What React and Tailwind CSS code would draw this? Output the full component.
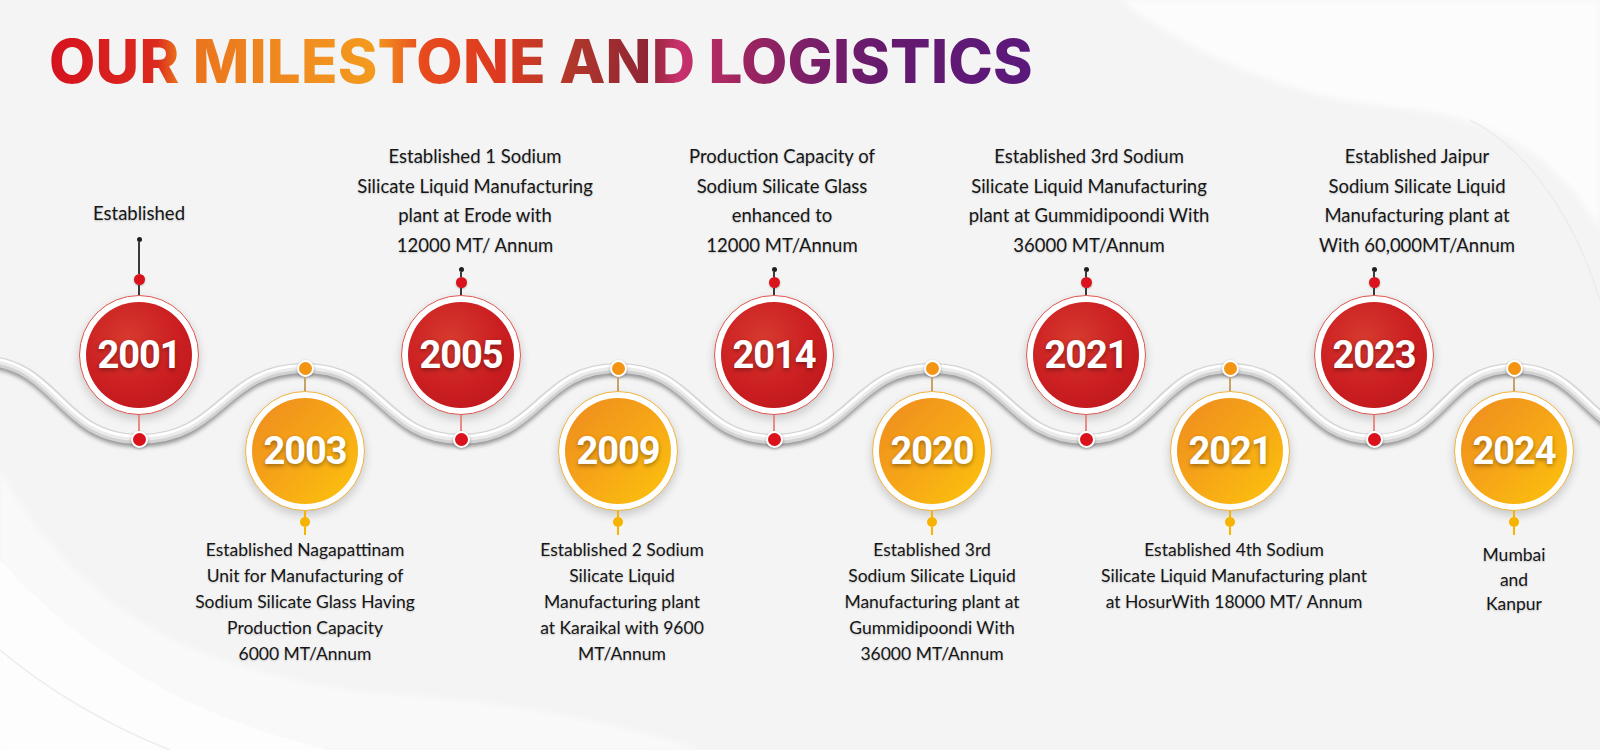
import React from "react";

const nodes = [
  { year: "2001", tone: "red", gap: "ml-[139px]", short: true, lines: ["Established"] },
  {
    year: "2003",
    tone: "orange",
    gap: "ml-[166px]",
    lines: ["Established Nagapattinam", "Unit for Manufacturing of", "Sodium Silicate Glass Having", "Production Capacity", "6000 MT/Annum"],
  },
  {
    year: "2005",
    tone: "red",
    gap: "ml-[156px]",
    shift: "translate-x-[14px]",
    lines: ["Established 1 Sodium", "Silicate Liquid Manufacturing", "plant at Erode with", "12000 MT/ Annum"],
  },
  {
    year: "2009",
    tone: "orange",
    gap: "ml-[157px]",
    shift: "translate-x-[4px]",
    lines: ["Established 2 Sodium", "Silicate Liquid", "Manufacturing plant", "at Karaikal with 9600", "MT/Annum"],
  },
  {
    year: "2014",
    tone: "red",
    gap: "ml-[156px]",
    shift: "translate-x-[8px]",
    lines: ["Production Capacity of", "Sodium Silicate Glass", "enhanced to", "12000 MT/Annum"],
  },
  {
    year: "2020",
    tone: "orange",
    gap: "ml-[158px]",
    lines: ["Established 3rd", "Sodium Silicate Liquid", "Manufacturing plant at", "Gummidipoondi With", "36000 MT/Annum"],
  },
  {
    year: "2021",
    tone: "red",
    gap: "ml-[154px]",
    shift: "translate-x-[3px]",
    lines: ["Established 3rd Sodium", "Silicate Liquid Manufacturing", "plant at Gummidipoondi With", "36000 MT/Annum"],
  },
  {
    year: "2021",
    tone: "orange",
    gap: "ml-[144px]",
    shift: "translate-x-[4px]",
    lines: ["Established 4th Sodium", "Silicate Liquid Manufacturing plant", "at HosurWith 18000 MT/ Annum"],
  },
  {
    year: "2023",
    tone: "red",
    gap: "ml-[144px]",
    shift: "translate-x-[43px]",
    lines: ["Established Jaipur", "Sodium Silicate Liquid", "Manufacturing plant at", "With 60,000MT/Annum"],
  },
  { year: "2024", tone: "orange", gap: "ml-[140px]", compact: true, lines: ["Mumbai", "and", "Kanpur"] },
];

// crest / trough points of the tube, page coordinates
const wavePts = [
  [-22, 360], [139, 439], [305, 368], [461, 439], [618, 368], [774, 439],
  [932, 368], [1086, 439], [1230, 368], [1374, 439], [1514, 368], [1660, 439],
];
const waveD = wavePts.reduce((d, [x, y], i) => {
  if (i === 0) return `M${x} ${y}`;
  const [px, py] = wavePts[i - 1];
  const m = (x - px) / 2;
  return `${d} C${px + m} ${py} ${x - m} ${y} ${x} ${y}`;
}, "");

function Backdrop() {
  return (
    <svg className="absolute inset-0" width="1600" height="750" viewBox="0 0 1600 750">
      <defs>
        <filter id="soft" x="-5%" y="-50%" width="110%" height="200%">
          <feGaussianBlur stdDeviation="2" />
        </filter>
        <filter id="haze" x="-10%" y="-10%" width="120%" height="120%">
          <feGaussianBlur stdDeviation="3" />
        </filter>
      </defs>

      {/* swooshes */}
      <path d="M0 470 C 70 600, 190 680, 400 695 C 540 705, 640 730, 700 750 L 0 750 Z" fill="#ffffff" opacity="0.5" filter="url(#haze)" />
      <path d="M0 560 C 90 660, 200 720, 330 750 L 0 750 Z" fill="#ffffff" opacity="0.7" />
      <path d="M0 650 C 60 700, 120 730, 170 750" stroke="#ececec" strokeWidth="1.5" fill="none" />
      <path d="M1120 0 C 1200 60, 1300 100, 1400 108 C 1500 118, 1560 160, 1600 230 L 1600 0 Z" fill="#ffffff" opacity="0.75" filter="url(#haze)" />
      <path d="M1470 120 C 1530 150, 1575 220, 1600 300" stroke="#ececec" strokeWidth="1.5" fill="none" />

      {/* tube */}
      <path d={waveD} stroke="rgba(0,0,0,0.4)" strokeWidth="9" fill="none" transform="translate(0 3.5)" filter="url(#soft)" />
      <path d={waveD} stroke="#d2d2d2" strokeWidth="10" fill="none" />
      <path d={waveD} stroke="#ebebeb" strokeWidth="6" fill="none" transform="translate(0 -1)" />
      <path d={waveD} stroke="#ffffff" strokeWidth="2.5" fill="none" transform="translate(0 -2.5)" />
    </svg>
  );
}

function YearBadge({ year, tone }) {
  const red = tone === "red";
  return (
    <div
      className={`w-[120px] h-[120px] shrink-0 rounded-full bg-white p-[6px] shadow-[0_4px_10px_rgba(0,0,0,0.18)] border-[1.5px] ${
        red ? "border-[#e0574f]" : "border-[#f1b33e]"
      }`}
    >
      <div
        className={`w-full h-full rounded-full flex items-center justify-center ${
          red
            ? "bg-[radial-gradient(circle_at_40%_35%,#d63a2e_0%,#cc2022_50%,#b9141b_100%)]"
            : "bg-[linear-gradient(135deg,#ee8b1f_0%,#f6a517_50%,#fcc40c_100%)]"
        }`}
      >
        <span className="font-[Roboto,sans-serif] font-bold text-[38px] tracking-[-1px] text-white [text-shadow:0_2px_4px_rgba(0,0,0,0.35)]">
          {year}
        </span>
      </div>
    </div>
  );
}

function WaveDot({ tone }) {
  return (
    <div
      className={`w-[17px] h-[17px] shrink-0 rounded-full border-[2.5px] border-white shadow-[0_1px_3px_rgba(0,0,0,0.3)] ${
        tone === "red" ? "bg-[#d9121c]" : "bg-[#f39512]"
      }`}
    />
  );
}

function Caption({ lines, big, tight, shift = "" }) {
  return (
    <div
      className={`${shift} text-center font-[Lato,sans-serif] text-[#161616] [text-shadow:0_1px_2px_rgba(0,0,0,0.2)] ${
        big ? "text-[18.5px] leading-[29.5px]" : tight ? "text-[17.5px] leading-[24.5px]" : "text-[17.5px] leading-[26px]"
      }`}
    >
      {lines.map((l, i) => (
        <div key={i} className="whitespace-nowrap">
          {l}
        </div>
      ))}
    </div>
  );
}

function RedNode({ node }) {
  return (
    <div className={`${node.gap} w-0 shrink-0 flex flex-col items-center`}>
      {/* text sits above the stem */}
      <div className={`${node.short ? "h-[98px]" : "h-[130px]"} flex flex-col justify-end items-center`}>
        <Caption lines={node.lines} big shift={node.shift} />
      </div>
      <div className={node.short ? "h-[9px]" : "h-[7px]"} />
      <div className="w-[5px] h-[5px] rounded-full bg-[#1f1f1f]" />
      <div className={`w-[2px] bg-[#3a3a3a] ${node.short ? "h-[32px]" : "h-[5px]"}`} />
      <div className="w-[11px] h-[11px] rounded-full bg-[#d9121c] shadow-[0_1px_2px_rgba(0,0,0,0.25)]" />
      <div className={`w-[2px] bg-[#3a3a3a] ${node.short ? "h-[10px]" : "h-[7px]"}`} />
      <YearBadge year={node.year} tone="red" />
      <div className="w-[2px] h-[16px] bg-[#ec8a84]" />
      <WaveDot tone="red" />
    </div>
  );
}

function OrangeNode({ node }) {
  return (
    <div className={`${node.gap} w-0 shrink-0 flex flex-col items-center pt-[230px]`}>
      <WaveDot tone="orange" />
      <div className="w-[2px] h-[14px] bg-[#c9a268]" />
      <YearBadge year={node.year} tone="orange" />
      <div className="w-[2px] h-[6px] bg-[#f5b400]" />
      <div className="w-[10px] h-[10px] rounded-full bg-[#f6b400]" />
      <div className="w-[2px] h-[8px] bg-[#f5b400]" />
      <div className={node.compact ? "mt-[8px]" : "mt-[2px]"}>
        <Caption lines={node.lines} tight={node.compact} shift={node.shift} />
      </div>
    </div>
  );
}

export default function App() {
  return (
    <div className="relative w-[1600px] h-[750px] overflow-hidden bg-[#f4f4f4]">
      <Backdrop />

      <div className="relative flex flex-col">
        {/* Heading */}
        <div className="h-[130px] pt-[31px] pl-[49px]">
          <h1 className="inline-block font-[Inter,sans-serif] font-extrabold text-[60px] leading-none tracking-[0.2px] bg-[linear-gradient(90deg,#d5121f_0%,#dc2a1e_11%,#e9701c_13%,#f08a20_24%,#f39a1e_33%,#e84a1e_38%,#dc3a20_46%,#b63a2a_52%,#8e2434_61%,#c9316c_64%,#a0265f_70%,#7c1f68_77%,#651a6e_85%,#5b187c_100%)] bg-clip-text text-transparent">
            OUR MILESTONE AND LOGISTICS
          </h1>
        </div>

        {/* Timeline */}
        <div className="flex items-start h-[620px]">
          {nodes.map((n, i) =>
            n.tone === "red" ? <RedNode key={i} node={n} /> : <OrangeNode key={i} node={n} />
          )}
        </div>
      </div>
    </div>
  );
}
